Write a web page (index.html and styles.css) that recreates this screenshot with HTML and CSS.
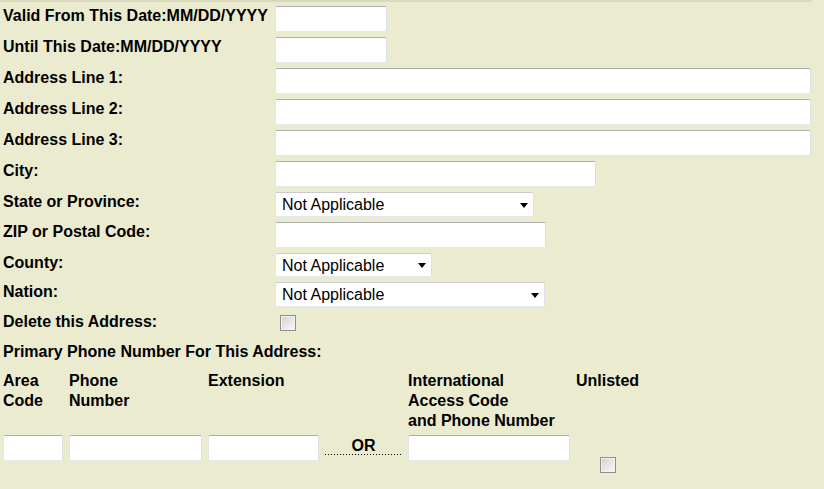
FILE: index.html
```html
<!DOCTYPE html>
<html lang="en">
<head>
  <meta charset="UTF-8" />
  <title>Address Details</title>
  <link rel="stylesheet" href="styles.css">
</head>
<body>
  <div class="topline"></div>

  <form class="address-form">
    <div class="row">
      <label class="lbl" for="valid-from">Valid From This Date:MM/DD/YYYY</label>
      <input class="txt w-date" id="valid-from" type="text">
    </div>
    <div class="row">
      <label class="lbl" for="valid-until">Until This Date:MM/DD/YYYY</label>
      <input class="txt w-date" id="valid-until" type="text">
    </div>
    <div class="row">
      <label class="lbl" for="addr1">Address Line 1:</label>
      <input class="txt w-addr" id="addr1" type="text">
    </div>
    <div class="row">
      <label class="lbl" for="addr2">Address Line 2:</label>
      <input class="txt w-addr" id="addr2" type="text">
    </div>
    <div class="row">
      <label class="lbl" for="addr3">Address Line 3:</label>
      <input class="txt w-addr" id="addr3" type="text">
    </div>
    <div class="row">
      <label class="lbl" for="city">City:</label>
      <input class="txt w-city" id="city" type="text">
    </div>
    <div class="row">
      <label class="lbl" for="state">State or Province:</label>
      <span class="select-wrap">
        <select class="sel w-state h25" id="state"><option>Not Applicable</option></select>
      </span>
    </div>
    <div class="row">
      <label class="lbl" for="zip">ZIP or Postal Code:</label>
      <input class="txt w-zip" id="zip" type="text">
    </div>
    <div class="row">
      <label class="lbl" for="county">County:</label>
      <span class="select-wrap">
        <select class="sel w-county h24" id="county"><option>Not Applicable</option></select>
      </span>
    </div>
    <div class="row">
      <label class="lbl" for="nation">Nation:</label>
      <span class="select-wrap">
        <select class="sel w-nation h25" id="nation"><option>Not Applicable</option></select>
      </span>
    </div>
    <div class="row">
      <label class="lbl" for="delete-addr">Delete this Address:</label>
      <input class="chk chk-delete" id="delete-addr" type="checkbox">
    </div>

    <div class="phone-title">Primary Phone Number For This Address:</div>

    <div class="phone-grid">
      <div class="col-head">Area<br>Code</div>
      <div class="col-head">Phone<br>Number</div>
      <div class="col-head">Extension</div>
      <div></div>
      <div class="col-head">International<br>Access Code<br>and Phone Number</div>
      <div class="col-head">Unlisted</div>

      <input class="txt" type="text" aria-label="Area Code">
      <input class="txt" type="text" aria-label="Phone Number">
      <input class="txt" type="text" aria-label="Extension">
      <div class="or-cell">OR</div>
      <input class="txt" type="text" aria-label="International Phone Number">
      <input class="chk chk-unlisted" type="checkbox" aria-label="Unlisted">
    </div>
  </form>
</body>
</html>
```

FILE: styles.css
```css
body { margin: 0; padding: 0; background: #ebebd0; color: #000; font-family: "Liberation Sans", Arial, sans-serif; font-size: 16px; }
.topline { width: 812px; height: 2px; background: #d8d8bf; }

.address-form { display: flex; flex-direction: column; gap: 5px; padding: 4px 0 0 3px; }
.row { display: flex; align-items: flex-start; }
.lbl { width: 272px; flex: none; font-weight: bold; line-height: 20px; }

.txt { box-sizing: border-box; height: 26px; margin: 0; padding: 2px 4px; background: #fff; border: 1px solid; border-color: #abadb3 #dbdfe6 #e3e9ef #e2e3ea; border-radius: 2px; font: 16px "Liberation Sans", Arial, sans-serif; }
.w-date { width: 112px; }
.w-addr { width: 536px; }
.w-city { width: 321px; }
.w-zip { width: 271px; }

.select-wrap { position: relative; display: inline-block; }
.select-wrap::after { content: ""; position: absolute; right: 6px; top: 50%; margin-top: -2px; border-style: solid; border-width: 5px 4px 0; border-color: #000 transparent transparent; pointer-events: none; }
.sel { appearance: none; -webkit-appearance: none; box-sizing: border-box; display: block; margin: 0; padding: 0 20px 0 6px; background: #fff; border: 1px solid; border-color: #c9cbd0 #dbdfe6 #e3e9ef #e2e3ea; border-radius: 2px; color: #000; font: 16px "Liberation Sans", Arial, sans-serif; }
.h25 { height: 25px; }
.h24 { height: 24px; }
.w-state { width: 259px; }
.w-county { width: 157px; }
.w-nation { width: 270px; }

.chk { appearance: none; -webkit-appearance: none; box-sizing: border-box; width: 16px; height: 16px; margin: 3px 0; border: 1px solid #8e8f8f; background: linear-gradient(135deg, #d2d2d2, #f9f9f9); box-shadow: inset 0 0 0 1px #f2f2f2; }
.chk-delete { margin-left: 5px; }

.phone-title { margin-top: 3px; font-weight: bold; line-height: 20px; }

.phone-grid { display: grid; grid-template-columns: 60px 133px 111px 77px 162px auto; column-gap: 6px; row-gap: 4px; margin-top: 4px; justify-content: start; align-items: start; }
.col-head { font-weight: bold; line-height: 20px; }
.or-cell { margin-top: 1px; height: 19px; text-align: center; font-weight: bold; line-height: 19px; background: linear-gradient(to right, #000 1px, transparent 1px) left bottom / 3px 1px repeat-x; }
.chk-unlisted { justify-self: center; margin-top: 22px; }
```
